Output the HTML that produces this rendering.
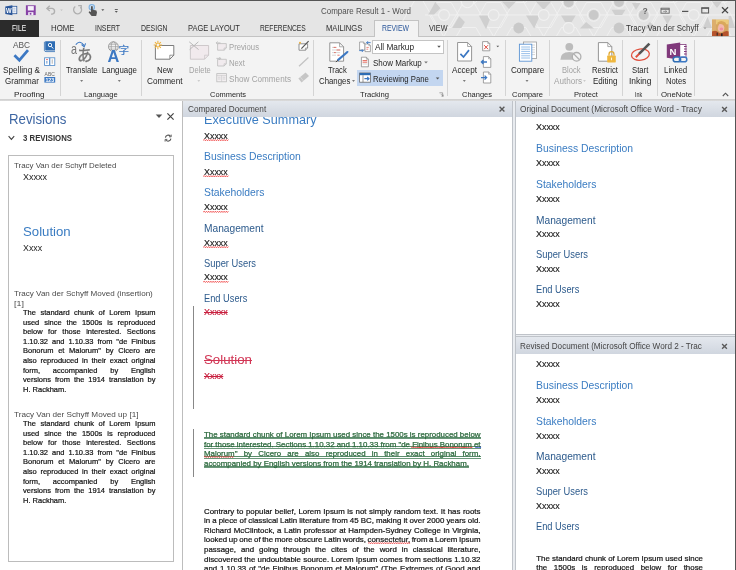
<!DOCTYPE html>
<html><head><meta charset="utf-8"><title>Compare Result 1 - Word</title>
<style>
html,body{margin:0;padding:0;}
body{width:736px;height:570px;overflow:hidden;position:relative;background:#fff;font-family:"Liberation Sans",sans-serif;}
.t{position:absolute;white-space:pre;}
.b{position:absolute;}
svg{position:absolute;overflow:visible;}
</style></head><body>
<div id="win" style="position:absolute;left:0;top:0;width:736px;height:570px;overflow:hidden;will-change:transform;">
<div class="b" style="left:0px;top:0px;width:736px;height:37px;background:#e5e5e5;"></div>
<div class="b" style="left:0px;top:0px;width:736px;height:1px;background:#555;"></div>
<div class="b" style="left:0px;top:36px;width:736px;height:1px;background:#c3c3c3;"></div>
<div class="b" style="left:0px;top:37px;width:736px;height:62px;background:#f3f3f3;"></div>
<div class="b" style="left:0px;top:99px;width:736px;height:1.5999999999999943px;background:linear-gradient(#cdcdcd,#dcdcdc);"></div>
<div class="b" style="left:0px;top:20px;width:39px;height:16.5px;background:#2b2b2b;"></div>
<div class="b" style="left:373.5px;top:20px;width:45.0px;height:17px;background:#f3f3f3;border:1px solid #c3c3c3;border-bottom:none;box-sizing:border-box;"></div>
<div class="b" style="left:60.0px;top:40px;width:1.0px;height:56px;background:#d4d4d4;"></div>
<div class="b" style="left:141.0px;top:40px;width:1.0px;height:56px;background:#d4d4d4;"></div>
<div class="b" style="left:313.3px;top:40px;width:1.0px;height:56px;background:#d4d4d4;"></div>
<div class="b" style="left:447.0px;top:40px;width:1.0px;height:56px;background:#d4d4d4;"></div>
<div class="b" style="left:505.3px;top:40px;width:1.0px;height:56px;background:#d4d4d4;"></div>
<div class="b" style="left:549.0px;top:40px;width:1.0px;height:56px;background:#d4d4d4;"></div>
<div class="b" style="left:622.2px;top:40px;width:1.0px;height:56px;background:#d4d4d4;"></div>
<div class="b" style="left:657.0px;top:40px;width:1.0px;height:56px;background:#d4d4d4;"></div>
<div class="b" style="left:694.0px;top:40px;width:1.0px;height:56px;background:#d4d4d4;"></div>
<div class="b" style="left:372.4px;top:39.5px;width:71.40000000000003px;height:14.799999999999997px;background:#fff;border:1px solid #c4c4c4;box-sizing:border-box;"></div>
<div class="b" style="left:357.4px;top:70.2px;width:85.60000000000002px;height:15.599999999999994px;background:#c3d6f0;"></div>
<div class="b" style="left:182.2px;top:101px;width:1.0px;height:469px;background:#bdbdbd;"></div>
<div class="b" style="left:183.3px;top:100.6px;width:328.99999999999994px;height:16.80000000000001px;background:linear-gradient(#e4e8ee,#d0d6df);z-index:4;"></div>
<div class="b" style="left:512.3px;top:100.6px;width:3.300000000000068px;height:469.4px;background:#e9ecf0;border-left:1px solid #bfc3c9;border-right:1px solid #bfc3c9;box-sizing:border-box;"></div>
<div class="b" style="left:515.6px;top:100.6px;width:220.39999999999998px;height:16.80000000000001px;background:linear-gradient(#e4e8ee,#d0d6df);z-index:4;"></div>
<div class="b" style="left:515.6px;top:333.8px;width:220.39999999999998px;height:3.1999999999999886px;background:#e9ecf0;border-top:1px solid #bfc3c9;border-bottom:1px solid #bfc3c9;box-sizing:border-box;"></div>
<div class="b" style="left:515.6px;top:337px;width:220.39999999999998px;height:17.399999999999977px;background:linear-gradient(#e4e8ee,#d0d6df);z-index:4;"></div>
<div class="b" style="left:8.4px;top:155.2px;width:165.6px;height:406.59999999999997px;border:1px solid #bcbcbc;box-sizing:border-box;background:#fff;"></div>
<div class="b" style="left:193px;top:305.7px;width:1px;height:103.80000000000001px;background:#888;"></div>
<div class="b" style="left:193px;top:429.4px;width:1px;height:47.400000000000034px;background:#888;"></div>
<div class="b" style="left:735px;top:0px;width:1px;height:570px;background:#555;z-index:7;"></div>
<div class="b" style="left:204px;top:436.9px;width:276.5px;height:0.6500000000000341px;background:#5b8d6c;"></div>
<div class="b" style="left:204px;top:438.45px;width:276.5px;height:0.6500000000000341px;background:#6b987a;"></div>
<div class="b" style="left:204px;top:446.48px;width:276.5px;height:0.6499999999999773px;background:#5b8d6c;"></div>
<div class="b" style="left:204px;top:448.03px;width:276.5px;height:0.6500000000000341px;background:#6b987a;"></div>
<div class="b" style="left:204px;top:456.06px;width:276.5px;height:0.6499999999999773px;background:#5b8d6c;"></div>
<div class="b" style="left:204px;top:457.61px;width:276.5px;height:0.6499999999999773px;background:#6b987a;"></div>
<div class="b" style="left:204px;top:465.64px;width:265px;height:0.6500000000000341px;background:#5b8d6c;"></div>
<div class="b" style="left:204px;top:467.19px;width:265px;height:0.6499999999999773px;background:#6b987a;"></div>
<svg width="736" height="570" viewBox="0 0 736 570" style="left:0;top:0"><defs><clipPath id="tclip"><rect x="400" y="1" width="336" height="35"/></clipPath></defs><g clip-path="url(#tclip)"><path d="M425,15H736" stroke="#f1f1f1" stroke-width="0.9"/><path d="M372.5,0L393.9,37M414.9,0L393.5,37M422.5,0L443.9,37M464.9,0L443.5,37M472.5,0L493.9,37M514.9,0L493.5,37M522.5,0L543.9,37M564.9,0L543.5,37M572.5,0L593.9,37M614.9,0L593.5,37M622.5,0L643.9,37M664.9,0L643.5,37M672.5,0L693.9,37M714.9,0L693.5,37M722.5,0L743.9,37M764.9,0L743.5,37M772.5,0L793.9,37M814.9,0L793.5,37" stroke="#f1f1f1" stroke-width="0.9" fill="none"/><polygon points="458.4,15.0 451.2,27.5 436.8,27.5 429.6,15.0 436.8,2.5 451.2,2.5" fill="none" stroke="#f1f1f1" stroke-width="0.9"/><polygon points="508.0,15.0 500.8,27.5 486.4,27.5 479.2,15.0 486.4,2.5 500.8,2.5" fill="none" stroke="#f1f1f1" stroke-width="0.9"/><polygon points="558.1,15.0 550.9,27.5 536.5,27.5 529.3,15.0 536.5,2.5 550.9,2.5" fill="none" stroke="#f1f1f1" stroke-width="0.9"/><polygon points="608.1,15.0 600.9,27.5 586.5,27.5 579.3,15.0 586.5,2.5 600.9,2.5" fill="none" stroke="#f1f1f1" stroke-width="0.9"/><polygon points="658.1,15.0 650.9,27.5 636.5,27.5 629.3,15.0 636.5,2.5 650.9,2.5" fill="none" stroke="#f1f1f1" stroke-width="0.9"/><polygon points="708.1,15.0 700.9,27.5 686.5,27.5 679.3,15.0 686.5,2.5 700.9,2.5" fill="none" stroke="#f1f1f1" stroke-width="0.9"/><polygon points="483.1,-10.0 475.9,2.5 461.5,2.5 454.3,-10.0 461.5,-22.5 475.9,-22.5" fill="none" stroke="#f1f1f1" stroke-width="0.9"/><polygon points="533.1,-10.0 525.9,2.5 511.5,2.5 504.3,-10.0 511.5,-22.5 525.9,-22.5" fill="none" stroke="#f1f1f1" stroke-width="0.9"/><polygon points="583.1,-10.0 575.9,2.5 561.5,2.5 554.3,-10.0 561.5,-22.5 575.9,-22.5" fill="none" stroke="#f1f1f1" stroke-width="0.9"/><polygon points="633.4,-10.0 626.2,2.5 611.8,2.5 604.6,-10.0 611.8,-22.5 626.2,-22.5" fill="none" stroke="#f1f1f1" stroke-width="0.9"/><polygon points="683.4,-10.0 676.2,2.5 661.8,2.5 654.6,-10.0 661.8,-22.5 676.2,-22.5" fill="none" stroke="#f1f1f1" stroke-width="0.9"/><polygon points="733.4,-10.0 726.2,2.5 711.8,2.5 704.6,-10.0 711.8,-22.5 726.2,-22.5" fill="none" stroke="#f1f1f1" stroke-width="0.9"/><polygon points="483.1,40.0 475.9,52.5 461.5,52.5 454.3,40.0 461.5,27.5 475.9,27.5" fill="none" stroke="#f1f1f1" stroke-width="0.9"/><polygon points="533.1,40.0 525.9,52.5 511.5,52.5 504.3,40.0 511.5,27.5 525.9,27.5" fill="none" stroke="#f1f1f1" stroke-width="0.9"/><polygon points="583.1,40.0 575.9,52.5 561.5,52.5 554.3,40.0 561.5,27.5 575.9,27.5" fill="none" stroke="#f1f1f1" stroke-width="0.9"/><polygon points="633.4,40.0 626.2,52.5 611.8,52.5 604.6,40.0 611.8,27.5 626.2,27.5" fill="none" stroke="#f1f1f1" stroke-width="0.9"/><polygon points="683.4,40.0 676.2,52.5 661.8,52.5 654.6,40.0 661.8,27.5 676.2,27.5" fill="none" stroke="#f1f1f1" stroke-width="0.9"/><polygon points="733.4,40.0 726.2,52.5 711.8,52.5 704.6,40.0 711.8,27.5 726.2,27.5" fill="none" stroke="#f1f1f1" stroke-width="0.9"/><polygon points="435.2,2 440.5,8.2 434,14.6 428.2,14.6 432,8" fill="#cfcfcf"/><polygon points="459.2,16.3 464.9,22 461.3,28 452.2,28" fill="#cfcfcf"/><polygon points="478.8,15.5 491.3,15.5 486.1,29.3" fill="#cfcfcf"/><polygon points="502,1.6 516,1.6 509,9" fill="#cfcfcf"/><polygon points="526,15.5 539.9,15.5 534.2,28.5" fill="#cfcfcf"/><polygon points="535.8,1.6 551.3,1.6 543.6,9.8" fill="#cfcfcf"/><polygon points="561,15.5 575.7,15.5 571.7,22 565.1,22" fill="#cfcfcf"/><polygon points="611.6,9.8 625.5,9.8 622.2,15 614.9,15" fill="#cfcfcf"/><polygon points="632,3 640.5,3 636,10" fill="#cfcfcf"/><polygon points="662.5,15.5 672.3,15.5 667.4,24.5" fill="#cfcfcf"/><polygon points="712,1.6 722,1.6 717,8" fill="#cfcfcf"/><polygon points="728.6,16 731,16 735,28 728.6,28" fill="#cfcfcf"/><polygon points="703,28 707.6,17 712,28" fill="#cfcfcf"/><polygon points="586,22 594,28.5 580,28.5" fill="#cfcfcf"/><polygon points="650,22 657,28.5 644,28.5" fill="#cfcfcf"/><circle cx="444" cy="15" r="5.4" fill="#e5e5e5" stroke="#f1f1f1" stroke-width="1.1"/><circle cx="493.6" cy="15" r="5.4" fill="#e5e5e5" stroke="#f1f1f1" stroke-width="1.1"/><circle cx="543.7" cy="15" r="5.4" fill="#e5e5e5" stroke="#f1f1f1" stroke-width="1.1"/><circle cx="568.7" cy="28" r="5.4" fill="#e5e5e5" stroke="#f1f1f1" stroke-width="1.1"/><circle cx="693.7" cy="15" r="5.4" fill="#e5e5e5" stroke="#f1f1f1" stroke-width="1.1"/><circle cx="467.5" cy="1.6" r="6.2" fill="#e5e5e5" stroke="#f1f1f1" stroke-width="1.1"/><circle cx="593.7" cy="15" r="6.3" fill="#e5e5e5" stroke="#f1f1f1" stroke-width="1"/><circle cx="593.7" cy="15" r="4.9" fill="#c9c9c9"/><circle cx="568.7" cy="2.4" r="6.3" fill="#e5e5e5" stroke="#f1f1f1" stroke-width="1"/><circle cx="568.7" cy="2.4" r="4.9" fill="#c9c9c9"/><circle cx="619" cy="2" r="6.3" fill="#e5e5e5" stroke="#f1f1f1" stroke-width="1"/><circle cx="619" cy="2" r="4.9" fill="#c9c9c9"/><circle cx="643.7" cy="15" r="6.3" fill="#e5e5e5" stroke="#f1f1f1" stroke-width="1"/><circle cx="643.7" cy="15" r="4.9" fill="#c9c9c9"/><circle cx="518.7" cy="28" r="5.4" fill="#c9c9c9"/><circle cx="619" cy="28" r="5.4" fill="#c9c9c9"/></g>
<rect x="11.6" y="6.3" width="5.2" height="7.4" fill="#fff" stroke="#2b579a" stroke-width="0.8"/>
<path d="M13.2,8.2H15.6M13.2,10H15.6M13.2,11.8H15.6" stroke="#7f9cc8" stroke-width="0.7"/>
<polygon points="5.3,6.4 12.4,5.2 12.4,15.2 5.3,14" fill="#2b579a"/>
<text x="6" y="12.6" font-size="6.4" font-weight="700" fill="#fff" font-family="Liberation Sans, sans-serif" textLength="5.6" lengthAdjust="spacingAndGlyphs">W</text>
<rect x="25.9" y="5.3" width="9.8" height="9.8" fill="#8742a6"/>
<rect x="27.8" y="6.1" width="6" height="4.4" fill="#f6f0fa"/>
<rect x="28.2" y="12.2" width="5.2" height="2.9" fill="#f6f0fa"/>
<rect x="29.7" y="12.9" width="1.7" height="1.8" fill="#8742a6"/>
<path d="M47,8.4H52.2A2.9,2.9 0 0 1 52.2,14.1H51" fill="none" stroke="#b0b0b0" stroke-width="1.4"/>
<path d="M49.8,5.8L46.9,8.4L49.8,11" fill="none" stroke="#b0b0b0" stroke-width="1.4"/>
<polygon points="60.20,9.45 62.80,9.45 61.50,10.95" fill="#c2c2c2"/>
<path d="M80.43,6.97A4.0,4.0 0 1 1 75.31,6.52" fill="none" stroke="#b0b0b0" stroke-width="1.3"/>
<path d="M78.2,5.6H81.3V8.8" fill="none" stroke="#b0b0b0" stroke-width="1.2"/>
<circle cx="91.8" cy="7.2" r="2.7" fill="#c9def2" stroke="#7fb2e2" stroke-width="1.1"/>
<path d="M91,7V12L89.4,11.2L88.6,12.2L91.6,15.9H96.2L97,12.4L96.4,10.6L92.8,9.8V7A0.9,0.9 0 0 0 91,7Z" fill="#555"/>
<polygon points="101.30,9.35 104.30,9.35 102.80,11.05" fill="#555"/>
<rect x="114.8" y="9" width="3" height="0.9" fill="#555"/>
<polygon points="114.80,10.95 117.80,10.95 116.30,12.65" fill="#555"/>
<text x="642.4" y="13.6" font-size="8.6" font-weight="700" fill="#666" font-family="Liberation Sans, sans-serif">?</text>
<rect x="661" y="8.2" width="8.2" height="5" fill="none" stroke="#666" stroke-width="0.9"/>
<path d="M661,9.4H669.2" stroke="#666" stroke-width="0.8"/><path d="M663.2,11.4H666.5M665.4,10.3L666.7,11.4L665.4,12.5" stroke="#666" stroke-width="0.6" fill="none"/>
<rect x="682" y="10.8" width="6.3" height="1.2" fill="#555"/>
<rect x="701.8" y="8" width="6.8" height="5" fill="none" stroke="#555" stroke-width="1"/><rect x="701.3" y="7.4" width="7.8" height="1.3" fill="#555"/>
<path d="M722,7.3L728,13.1M728,7.3L722,13.1" stroke="#444" stroke-width="1.3"/>
<polygon points="703.60,27.60 706.40,27.60 705.00,29.20" fill="#999"/>
<rect x="712" y="19.7" width="16.6" height="16.4" fill="#d6a564"/>
<rect x="712" y="19.7" width="16.6" height="4.6" fill="#eccb7c"/>
<rect x="712" y="19.7" width="4" height="12" fill="#dcae6c"/>
<ellipse cx="721" cy="27.6" rx="3.4" ry="4.2" fill="#f2b9ac"/>
<ellipse cx="721.4" cy="29" rx="1.8" ry="1.6" fill="#f08fa0"/>
<path d="M717.6,22.6Q721,19.6 725.4,22.6Q727.6,26 726,31L724.6,27Q723,23.4 719.4,24Q717.6,26 717.8,29.4Q716.4,26 717.6,22.6Z" fill="#d9a85c"/>
<path d="M712,31.6Q716,29.6 718.6,32.4Q721.4,34.6 724.6,31.6Q727,30.4 728.6,31.6V36.1H712Z" fill="#b5532c"/>
<rect x="716.6" y="32.6" width="1.2" height="3" fill="#3a2a24"/><rect x="721" y="33.4" width="1.6" height="2.7" fill="#2a2424"/>
<path d="M14.4,55.2L19.4,60.2L28,50.2" fill="none" stroke="#3c78c3" stroke-width="2.7"/>
<path d="M45.2,41.2H55V50.6H46A1,1 0 0 1 45.2,49.8Z" fill="#2e6db4"/>
<path d="M44.4,41.8V50.4Q44.6,51.6 46,51.6H55" fill="none" stroke="#2e6db4" stroke-width="0.8"/>
<circle cx="50" cy="45" r="1.7" fill="none" stroke="#fff" stroke-width="0.9"/><path d="M51.2,46.3L53.2,48.5" stroke="#fff" stroke-width="1"/>
<rect x="44.6" y="57.8" width="4.9" height="7.6" fill="#fff" stroke="#4a86c8" stroke-width="0.8"/>
<rect x="49.9" y="57.8" width="4.9" height="7.6" fill="#fff" stroke="#4a86c8" stroke-width="0.8"/>
<rect x="46" y="59.3" width="2" height="0.8" fill="#e05050"/><rect x="46" y="61" width="1.6" height="2.6" fill="#9bbbe0"/><rect x="51.6" y="59.3" width="1.4" height="4.4" fill="#c8c8c8"/>
<text x="44.6" y="76.3" font-size="4.6" fill="#666" font-family="Liberation Sans, sans-serif" textLength="10.2" lengthAdjust="spacingAndGlyphs">ABC</text>
<rect x="44.4" y="77" width="10.8" height="5.6" fill="#3b78c3"/>
<text x="45.4" y="81.7" font-size="4.8" font-weight="700" fill="#fff" font-family="Liberation Sans, sans-serif" textLength="8.8" lengthAdjust="spacingAndGlyphs">123</text>
<text x="70.9" y="54.4" font-size="14.2" fill="#777" font-family="Liberation Sans, sans-serif" textLength="6" lengthAdjust="spacingAndGlyphs">a</text>
<text x="77" y="61.2" font-size="15.6" fill="#777" stroke="#777" stroke-width="0.35" font-family="Liberation Sans, Noto Sans CJK JP, sans-serif">あ</text>
<path d="M75.8,44.6Q79.8,39.6 84,45.4" fill="none" stroke="#3c78c3" stroke-width="1.1"/><path d="M81.6,44.5L84.2,46.8L85.6,43.4" fill="none" stroke="#3c78c3" stroke-width="1.1"/>
<polygon points="80.10,80.15 83.10,80.15 81.60,81.85" fill="#555"/>
<circle cx="113.4" cy="46.7" r="4.9" fill="none" stroke="#8a8a8a" stroke-width="0.8"/><ellipse cx="113.4" cy="46.7" rx="2.2" ry="4.9" fill="none" stroke="#8a8a8a" stroke-width="0.6"/><path d="M108.5,46.7H118.3M109.3,44.2H117.5M109.3,49.2H117.5" stroke="#8a8a8a" stroke-width="0.6"/>
<text x="107.6" y="62" font-size="16.4" font-weight="700" fill="#3c78c3" stroke="#f3f3f3" stroke-width="0.5" paint-order="stroke" font-family="Liberation Sans, sans-serif">A</text>
<text x="118.6" y="54" font-size="10.6" fill="#3c78c3" stroke="#3c78c3" stroke-width="0.2" font-family="Liberation Sans, Noto Sans CJK SC, sans-serif">字</text>
<polygon points="117.80,80.15 120.80,80.15 119.30,81.85" fill="#555"/>
<path d="M155.4,45.5H173.8V55.2L169.8,59.2H155.4Z" fill="#fff" stroke="#666" stroke-width="0.85"/>
<path d="M173.8,55.2H169.8V59.2" fill="none" stroke="#666" stroke-width="0.68"/>
<path d="M158.80,45.00L162.10,45.00M158.54,45.64L160.87,47.97M157.90,45.90L157.90,49.20M157.26,45.64L154.93,47.97M157.00,45.00L153.70,45.00M157.26,44.36L154.93,42.03M157.90,44.10L157.90,40.80M158.54,44.36L160.87,42.03" stroke="#f0b23c" stroke-width="1.1" fill="none"/><circle cx="157.9" cy="45" r="1.2" fill="#f3f3f3"/>
<path d="M190.4,45.5H208.6V55.2L204.6,59.2H190.4Z" fill="#f1eaed" stroke="#c9c4c6" stroke-width="0.9"/>
<path d="M208.6,55.2H204.6V59.2" fill="none" stroke="#c9c4c6" stroke-width="0.7200000000000001"/>
<path d="M189.2,41.8L198.6,49.6M198.4,41.8L189.6,49.6" stroke="#b9b9b9" stroke-width="1"/>
<polygon points="197.40,80.20 200.20,80.20 198.80,81.80" fill="#c0c0c0"/>
<path d="M217.6,43.6H226.3V48.0L224.10000000000002,50.2H217.6Z" fill="#f1ebee" stroke="#bdbdbd" stroke-width="0.8"/>
<path d="M226.3,48.0H224.10000000000002V50.2" fill="none" stroke="#bdbdbd" stroke-width="0.6400000000000001"/>
<path d="M216.2,42.9H220.5M217.6,41.5L216.2,42.9L217.6,44.3" stroke="#b3b3b3" stroke-width="0.7" fill="none"/>
<path d="M217.6,59.3H226.3V63.8L224.10000000000002,66H217.6Z" fill="#f1ebee" stroke="#bdbdbd" stroke-width="0.8"/>
<path d="M226.3,63.8H224.10000000000002V66" fill="none" stroke="#bdbdbd" stroke-width="0.6400000000000001"/>
<path d="M216.4,58.4H220.6M219.3,57L220.7,58.4L219.3,59.8" stroke="#b3b3b3" stroke-width="0.7" fill="none"/>
<rect x="216.8" y="73.6" width="9.6" height="8.2" fill="#f3eff1" stroke="#bdbdbd" stroke-width="0.8"/><path d="M216.8,75.4H226.4M221.6,75.4V81.8M218,77.2H220.6M218,79H220.6M222.6,77.2H225.4M222.6,79H225.4" stroke="#c4c4c4" stroke-width="0.6"/>
<path d="M299,43.8H307.6V48.0L305.40000000000003,50.2H299Z" fill="#fff" stroke="#777" stroke-width="0.8"/>
<path d="M307.6,48.0H305.40000000000003V50.2" fill="none" stroke="#777" stroke-width="0.6400000000000001"/>
<path d="M308.6,41.2L302.6,47.4L301.4,48.7" stroke="#555" stroke-width="1.2"/><circle cx="300" cy="42.8" r="1" fill="#f0b23c"/>
<path d="M299,66.3L308.4,57.5" stroke="#c2c2c2" stroke-width="1.2"/>
<polygon points="298.4,78.4 305.6,72.6 309,76 301.6,82.6" fill="#c6c6c6"/><path d="M300.3,77L303.4,80.8" stroke="#e6e6e6" stroke-width="0.6"/>
<path d="M329.8,42.8 H339.6 L343.6,46.8 V61.2 H329.8 Z" fill="#fff" stroke="#8a8a8a" stroke-width="0.9"/>
<path d="M339.6,42.8 V46.8 H343.6" fill="none" stroke="#8a8a8a" stroke-width="0.7200000000000001"/>
<path d="M332,47.4H335.6M332,50H340M332,52.6H340M332,55.2H336" stroke="#c4c4c4" stroke-width="0.7"/><path d="M333.6,47.4H336.4M336.6,50H340.4M337.4,55.2H339.6M334,52.6H335.8" stroke="#e05a4e" stroke-width="0.8"/>
<path d="M347.4,52L337.6,60.4" stroke="#3c78c3" stroke-width="2.1"/><path d="M337.9,60.1L335.9,62.1" stroke="#444" stroke-width="1"/><circle cx="347.6" cy="51.8" r="0.9" fill="#3c78c3"/>
<polygon points="352.00,80.15 355.00,80.15 353.50,81.85" fill="#555"/>
<path d="M359.6,42 H363.4 L365,43.6 V50 H359.6 Z" fill="#fff" stroke="#8a8a8a" stroke-width="0.7"/>
<path d="M363.4,42 V43.6 H365" fill="none" stroke="#8a8a8a" stroke-width="0.5599999999999999"/>
<path d="M365,44 H368.79999999999995 L370.4,45.6 V51.6 H365 Z" fill="#fff" stroke="#8a8a8a" stroke-width="0.7"/>
<path d="M368.79999999999995,44 V45.6 H370.4" fill="none" stroke="#8a8a8a" stroke-width="0.5599999999999999"/>
<path d="M366.4,47.4H368.8M366.4,49.2H368.2" stroke="#e05a4e" stroke-width="0.7"/>
<path d="M366.6,42.6H370.6M368,41.2L366.6,42.6L368,44" stroke="#3c78c3" stroke-width="0.9" fill="none"/><path d="M359.2,50.6H363.2M361.8,49.2L363.2,50.6L361.8,52" stroke="#3c78c3" stroke-width="0.9" fill="none"/>
<path d="M361.4,57.2 H366.4 L368.4,59.2 V66.8 H361.4 Z" fill="#fff" stroke="#8a8a8a" stroke-width="0.8"/>
<path d="M366.4,57.2 V59.2 H368.4" fill="none" stroke="#8a8a8a" stroke-width="0.6400000000000001"/>
<path d="M362.6,60.6H367.2M362.6,62.2H367.2" stroke="#e05a4e" stroke-width="0.9"/><path d="M362.6,64H367.2" stroke="#c4c4c4" stroke-width="0.7"/>
<rect x="359.6" y="73" width="10.8" height="9.2" fill="#fff" stroke="#6a6a6a" stroke-width="0.8"/><rect x="359.6" y="73" width="10.8" height="2.2" fill="#2e6db4"/><path d="M363,75.2V82.2" stroke="#6a6a6a" stroke-width="0.7"/>
<path d="M364.4,78.7H368.8M367.2,77L369,78.7L367.2,80.4" stroke="#3c78c3" stroke-width="1.2" fill="none"/>
<polygon points="437.20,45.80 440.80,45.80 439.00,47.80" fill="#555"/>
<polygon points="424.20,61.60 427.80,61.60 426.00,63.60" fill="#777"/>
<polygon points="435.80,77.40 439.40,77.40 437.60,79.40" fill="#555"/>
<path d="M439.4,92.8V95.8H442.6" fill="none" stroke="#888" stroke-width="0.7" transform="rotate(180 441 94.3)"/><path d="M441,94.2L443,96.2M443.2,94.6V96.3H441.5" stroke="#777" stroke-width="0.6" fill="none"/>
<path d="M457.6,42.5 H467.6 L471.6,46.5 V61 H457.6 Z" fill="#fff" stroke="#8a8a8a" stroke-width="0.9"/>
<path d="M467.6,42.5 V46.5 H471.6" fill="none" stroke="#8a8a8a" stroke-width="0.7200000000000001"/>
<path d="M460.4,53.8L463.5,57L469,50.1" fill="none" stroke="#3c78c3" stroke-width="1.7"/>
<polygon points="462.80,80.15 465.80,80.15 464.30,81.85" fill="#555"/>
<path d="M482.6,41.6 H487.8 L489.8,43.6 V50.8 H482.6 Z" fill="#fff" stroke="#8a8a8a" stroke-width="0.8"/>
<path d="M487.8,41.6 V43.6 H489.8" fill="none" stroke="#8a8a8a" stroke-width="0.6400000000000001"/>
<path d="M484.2,45.2L488,49.2M488,45.2L484.2,49.2" stroke="#e0483c" stroke-width="1"/>
<polygon points="496.40,45.70 499.20,45.70 497.80,47.30" fill="#555"/>
<path d="M483.4,56.6 H488.6 L490.8,58.800000000000004 V67.4 H483.4 Z" fill="#fff" stroke="#8a8a8a" stroke-width="0.8"/>
<path d="M488.6,56.6 V58.800000000000004 H490.8" fill="none" stroke="#8a8a8a" stroke-width="0.6400000000000001"/>
<path d="M481.4,62H487M483.4,60L481.4,62L483.4,64" stroke="#3c78c3" stroke-width="1.3" fill="none"/>
<path d="M483.4,72 H488.6 L490.8,74.2 V83 H483.4 Z" fill="#fff" stroke="#8a8a8a" stroke-width="0.8"/>
<path d="M488.6,72 V74.2 H490.8" fill="none" stroke="#8a8a8a" stroke-width="0.6400000000000001"/>
<path d="M481,77.6H486.4M484.6,75.6L486.6,77.6L484.6,79.6" stroke="#3c78c3" stroke-width="1.3" fill="none"/>
<rect x="523.6" y="42" width="12.8" height="16.6" fill="#fff" stroke="#9a9a9a" stroke-width="0.8"/><path d="M531,45H535M531,47.4H535M531,49.8H535M531,52.2H535M531,54.6H535" stroke="#bbb" stroke-width="0.6"/>
<rect x="519.4" y="44.2" width="12.4" height="17" fill="#fff" stroke="#5b93d3" stroke-width="0.9"/><path d="M521.2,47H530M521.2,49.2H530M521.2,51.4H530M521.2,53.6H530M521.2,55.8H530M521.2,58H530" stroke="#7fb0e4" stroke-width="0.8"/>
<polygon points="525.50,80.15 528.50,80.15 527.00,81.85" fill="#555"/>
<circle cx="569.3" cy="46.8" r="3.9" fill="#bcbcbc"/><path d="M560.4,59.8Q560.4,52 569.3,52Q578,52 578,59.8Z" fill="#bcbcbc"/>
<circle cx="576.6" cy="56.8" r="4.3" fill="#f3f3f3" stroke="#b0b0b0" stroke-width="1.3"/><path d="M573.7,53.9L579.5,59.7" stroke="#b0b0b0" stroke-width="1.3"/>
<polygon points="583.10,80.20 585.90,80.20 584.50,81.80" fill="#bdbdbd"/>
<path d="M598.4,42.6 H607.8 L611.8,46.6 V61.2 H598.4 Z" fill="#fff" stroke="#8a8a8a" stroke-width="0.9"/>
<path d="M607.8,42.6 V46.6 H611.8" fill="none" stroke="#8a8a8a" stroke-width="0.7200000000000001"/>
<rect x="607.2" y="55.6" width="8.6" height="6.8" rx="0.6" fill="#efb73e"/><path d="M609,55.6V54.2A2.5,2.5 0 0 1 614,54.2V55.6" fill="none" stroke="#e0a62c" stroke-width="1.2"/><rect x="611" y="57.6" width="1" height="2.6" fill="#fff6dd"/>
<ellipse cx="640.4" cy="54.6" rx="9" ry="5.6" fill="none" stroke="#e0503e" stroke-width="1.3" transform="rotate(-8 640.4 54.6)"/>
<path d="M649.4,43.6L638.8,54.2" stroke="#555" stroke-width="2.6"/><path d="M639.4,53.6L635.8,57.2" stroke="#e0503e" stroke-width="2"/>
<rect x="678" y="44.4" width="8" height="13" fill="#fff" stroke="#80397b" stroke-width="0.8"/><path d="M684,46.5H686.6M684,49H686.6M684,51.5H686.6M684,54H686.6" stroke="#80397b" stroke-width="1"/>
<polygon points="666.8,44.6 680.2,42.6 680.2,59.8 666.8,57.8" fill="#80397b"/>
<text x="669.4" y="54.6" font-size="9.6" font-weight="700" fill="#fff" font-family="Liberation Sans, sans-serif">N</text>
<rect x="673.2" y="57" width="7.4" height="4.8" rx="2.4" fill="#f3f3f3" stroke="#2e6db4" stroke-width="1.5"/><rect x="679.4" y="57" width="7.4" height="4.8" rx="2.4" fill="none" stroke="#3c78c3" stroke-width="1.5"/>
<path d="M722.8,96L725.5,93.2L728.2,96" fill="none" stroke="#555" stroke-width="1.1"/>
<polygon points="155.70,114.55 162.30,114.55 159.00,118.05" fill="#555"/>
<path d="M167.4,113.4L173.6,119.6M173.6,113.4L167.4,119.6" stroke="#444" stroke-width="1.2"/>
<path d="M8.6,136.2L11.4,139.4L14.2,136.2" fill="none" stroke="#444" stroke-width="1.1"/>
<path d="M165.4,137.6A2.8,2.8 0 0 1 170.4,136.2M170.9,138.6A2.8,2.8 0 0 1 165.9,140" fill="none" stroke="#555" stroke-width="1.1"/><path d="M171.2,134.6V136.8H169M165.1,141.6V139.4H167.3" fill="none" stroke="#555" stroke-width="0.9"/></svg>
<svg width="736" height="570" viewBox="0 0 736 570" style="left:0;top:0;z-index:6"><path d="M203.20,140.25L204.30,139.55L205.40,140.75L206.50,139.55L207.60,140.75L208.70,139.55L209.80,140.75L210.90,139.55L212.00,140.75L213.10,139.55L214.20,140.75L215.30,139.55L216.40,140.75L217.50,139.55L218.60,140.75L219.70,139.55L220.80,140.75L221.90,139.55L223.00,140.75L224.10,139.55L225.20,140.75L226.30,139.55L227.40,140.75L228.35,139.55" fill="none" stroke="#ee3535" stroke-width="0.85" stroke-linejoin="round"/>
<path d="M203.20,176.35L204.30,175.65L205.40,176.85L206.50,175.65L207.60,176.85L208.70,175.65L209.80,176.85L210.90,175.65L212.00,176.85L213.10,175.65L214.20,176.85L215.30,175.65L216.40,176.85L217.50,175.65L218.60,176.85L219.70,175.65L220.80,176.85L221.90,175.65L223.00,176.85L224.10,175.65L225.20,176.85L226.30,175.65L227.40,176.85L228.35,175.65" fill="none" stroke="#ee3535" stroke-width="0.85" stroke-linejoin="round"/>
<path d="M203.20,211.95L204.30,211.25L205.40,212.45L206.50,211.25L207.60,212.45L208.70,211.25L209.80,212.45L210.90,211.25L212.00,212.45L213.10,211.25L214.20,212.45L215.30,211.25L216.40,212.45L217.50,211.25L218.60,212.45L219.70,211.25L220.80,212.45L221.90,211.25L223.00,212.45L224.10,211.25L225.20,212.45L226.30,211.25L227.40,212.45L228.35,211.25" fill="none" stroke="#ee3535" stroke-width="0.85" stroke-linejoin="round"/>
<path d="M203.20,247.25L204.30,246.55L205.40,247.75L206.50,246.55L207.60,247.75L208.70,246.55L209.80,247.75L210.90,246.55L212.00,247.75L213.10,246.55L214.20,247.75L215.30,246.55L216.40,247.75L217.50,246.55L218.60,247.75L219.70,246.55L220.80,247.75L221.90,246.55L223.00,247.75L224.10,246.55L225.20,247.75L226.30,246.55L227.40,247.75L228.35,246.55" fill="none" stroke="#ee3535" stroke-width="0.85" stroke-linejoin="round"/>
<path d="M203.20,281.95L204.30,281.25L205.40,282.45L206.50,281.25L207.60,282.45L208.70,281.25L209.80,282.45L210.90,281.25L212.00,282.45L213.10,281.25L214.20,282.45L215.30,281.25L216.40,282.45L217.50,281.25L218.60,282.45L219.70,281.25L220.80,282.45L221.90,281.25L223.00,282.45L224.10,281.25L225.20,282.45L226.30,281.25L227.40,282.45L228.35,281.25" fill="none" stroke="#ee3535" stroke-width="0.85" stroke-linejoin="round"/>
<path d="M411.20,447.55L412.30,446.85L413.40,448.05L414.50,446.85L415.60,448.05L416.70,446.85L417.80,448.05L418.90,446.85L420.00,448.05L421.10,446.85L422.20,448.05L423.30,446.85L424.40,448.05L425.50,446.85L426.60,448.05L427.70,446.85L428.80,448.05L429.90,446.85L431.00,448.05L432.10,446.85L433.20,448.05L434.30,446.85L435.40,448.05L436.50,446.85L437.60,448.05L438.70,446.85L439.80,448.05L440.90,446.85L442.00,448.05L443.10,446.85L444.20,448.05L445.30,446.85L446.40,448.05L447.50,446.85L448.60,448.05L449.70,446.85L450.80,448.05L451.90,446.85L453.00,448.05L454.10,446.85L455.20,448.05L456.30,446.85L457.40,448.05L458.50,446.85L459.60,448.05L460.70,446.85L461.80,448.05L462.90,446.85L464.00,448.05L465.10,446.85L466.20,448.05L467.30,446.85L468.40,448.05L469.50,446.85L470.60,448.05L471.70,446.85L472.00,448.05" fill="none" stroke="#ee3535" stroke-width="0.85" stroke-linejoin="round"/>
<path d="M475.00,447.55L476.10,446.85L477.20,448.05L478.30,446.85L479.40,448.05L480.50,446.85L480.60,448.05" fill="none" stroke="#3a55d8" stroke-width="0.85" stroke-linejoin="round"/>
<path d="M204.00,457.05L205.10,456.35L206.20,457.55L207.30,456.35L208.40,457.55L209.50,456.35L210.60,457.55L211.70,456.35L212.80,457.55L213.90,456.35L215.00,457.55L216.10,456.35L217.20,457.55L218.30,456.35L219.40,457.55L220.50,456.35L221.60,457.55L222.70,456.35L223.80,457.55L224.90,456.35L226.00,457.55L227.10,456.35L228.20,457.55L229.30,456.35L230.40,457.55L231.50,456.35L232.60,457.55L233.50,456.35" fill="none" stroke="#ee3535" stroke-width="0.85" stroke-linejoin="round"/>
<path d="M368.20,543.25L369.30,542.55L370.40,543.75L371.50,542.55L372.60,543.75L373.70,542.55L374.80,543.75L375.90,542.55L377.00,543.75L378.10,542.55L379.20,543.75L380.30,542.55L381.40,543.75L382.50,542.55L383.60,543.75L384.70,542.55L385.80,543.75L386.90,542.55L388.00,543.75L389.10,542.55L390.20,543.75L391.30,542.55L392.40,543.75L393.50,542.55L394.60,543.75L395.70,542.55L396.80,543.75L397.90,542.55L399.00,543.75L400.10,542.55L401.20,543.75L402.30,542.55L403.40,543.75L404.50,542.55L405.60,543.75L406.70,542.55L407.80,543.75L408.90,542.55L409.80,543.75" fill="none" stroke="#ee3535" stroke-width="0.85" stroke-linejoin="round"/>
<path d="M499.6,106.8L504.4,111.60000000000001M504.4,106.8L499.6,111.60000000000001" stroke="#5a5a5a" stroke-width="1.35"/>
<path d="M722.1,106.89999999999999L726.9,111.7M726.9,106.89999999999999L722.1,111.7" stroke="#5a5a5a" stroke-width="1.35"/>
<path d="M722.1,344.0L726.9,348.79999999999995M726.9,344.0L722.1,348.79999999999995" stroke="#5a5a5a" stroke-width="1.35"/></svg>
<span class="t" id="t0" style="left:321.00px;top:7.47px;font-size:8.9px;line-height:8.9px;color:#505050;transform:scaleX(0.8958);transform-origin:0 0;">Compare Result 1 - Word</span>
<span class="t" id="t1" style="left:11.60px;top:23.95px;font-size:8.8px;line-height:8.8px;color:#fff;transform:scaleX(0.7643);transform-origin:0 0;">FILE</span>
<span class="t" id="t2" style="left:50.80px;top:23.95px;font-size:8.8px;line-height:8.8px;color:#2e2e2e;transform:scaleX(0.8899);transform-origin:0 0;">HOME</span>
<span class="t" id="t3" style="left:94.50px;top:23.95px;font-size:8.8px;line-height:8.8px;color:#2e2e2e;transform:scaleX(0.7786);transform-origin:0 0;">INSERT</span>
<span class="t" id="t4" style="left:140.50px;top:23.95px;font-size:8.8px;line-height:8.8px;color:#2e2e2e;transform:scaleX(0.7855);transform-origin:0 0;">DESIGN</span>
<span class="t" id="t5" style="left:187.70px;top:23.95px;font-size:8.8px;line-height:8.8px;color:#2e2e2e;transform:scaleX(0.8522);transform-origin:0 0;">PAGE LAYOUT</span>
<span class="t" id="t6" style="left:259.70px;top:23.95px;font-size:8.8px;line-height:8.8px;color:#2e2e2e;transform:scaleX(0.7617);transform-origin:0 0;">REFERENCES</span>
<span class="t" id="t7" style="left:325.70px;top:23.95px;font-size:8.8px;line-height:8.8px;color:#2e2e2e;transform:scaleX(0.8633);transform-origin:0 0;">MAILINGS</span>
<span class="t" id="t8" style="left:382.20px;top:23.95px;font-size:8.8px;line-height:8.8px;color:#2b579a;transform:scaleX(0.7780);transform-origin:0 0;">REVIEW</span>
<span class="t" id="t9" style="left:429.30px;top:23.95px;font-size:8.8px;line-height:8.8px;color:#2e2e2e;transform:scaleX(0.8228);transform-origin:0 0;">VIEW</span>
<span class="t" id="t10" style="left:625.70px;top:23.85px;font-size:8.8px;line-height:8.8px;color:#333;transform:scaleX(0.8963);transform-origin:0 0;">Tracy Van der Schyff</span>
<span class="t" id="t11" style="left:3.00px;top:66.00px;font-size:8.5px;line-height:8.5px;color:#262626;transform:scaleX(0.9665);transform-origin:0 0;">Spelling &amp;</span>
<span class="t" id="t12" style="left:5.00px;top:76.60px;font-size:8.5px;line-height:8.5px;color:#262626;transform:scaleX(0.9418);transform-origin:0 0;">Grammar</span>
<span class="t" id="t13" style="left:13.80px;top:91.23px;font-size:8.0px;line-height:8.0px;color:#262626;transform:scaleX(1.0236);transform-origin:0 0;">Proofing</span>
<span class="t" id="t14" style="left:65.50px;top:66.00px;font-size:8.5px;line-height:8.5px;color:#262626;transform:scaleX(0.8968);transform-origin:0 0;">Translate</span>
<span class="t" id="t15" style="left:101.80px;top:66.00px;font-size:8.5px;line-height:8.5px;color:#262626;transform:scaleX(0.9252);transform-origin:0 0;">Language</span>
<span class="t" id="t16" style="left:83.80px;top:91.23px;font-size:8.0px;line-height:8.0px;color:#262626;transform:scaleX(0.9468);transform-origin:0 0;">Language</span>
<span class="t" id="t17" style="left:156.80px;top:66.00px;font-size:8.5px;line-height:8.5px;color:#262626;transform:scaleX(0.9227);transform-origin:0 0;">New</span>
<span class="t" id="t18" style="left:147.00px;top:76.60px;font-size:8.5px;line-height:8.5px;color:#262626;transform:scaleX(0.9635);transform-origin:0 0;">Comment</span>
<span class="t" id="t19" style="left:188.50px;top:66.00px;font-size:8.5px;line-height:8.5px;color:#a3a3a3;transform:scaleX(0.8870);transform-origin:0 0;">Delete</span>
<span class="t" id="t20" style="left:229.00px;top:42.80px;font-size:8.5px;line-height:8.5px;color:#a3a3a3;transform:scaleX(0.9069);transform-origin:0 0;">Previous</span>
<span class="t" id="t21" style="left:229.00px;top:59.40px;font-size:8.5px;line-height:8.5px;color:#a3a3a3;transform:scaleX(0.9037);transform-origin:0 0;">Next</span>
<span class="t" id="t22" style="left:229.00px;top:75.40px;font-size:8.5px;line-height:8.5px;color:#a3a3a3;transform:scaleX(0.9580);transform-origin:0 0;">Show Comments</span>
<span class="t" id="t23" style="left:209.80px;top:91.23px;font-size:8.0px;line-height:8.0px;color:#262626;transform:scaleX(0.9305);transform-origin:0 0;">Comments</span>
<span class="t" id="t24" style="left:327.80px;top:66.00px;font-size:8.5px;line-height:8.5px;color:#262626;transform:scaleX(0.8931);transform-origin:0 0;">Track</span>
<span class="t" id="t25" style="left:319.00px;top:76.60px;font-size:8.5px;line-height:8.5px;color:#262626;transform:scaleX(0.9197);transform-origin:0 0;">Changes</span>
<span class="t" id="t26" style="left:374.80px;top:42.80px;font-size:8.5px;line-height:8.5px;color:#262626;transform:scaleX(0.9712);transform-origin:0 0;">All Markup</span>
<span class="t" id="t27" style="left:373.00px;top:59.40px;font-size:8.5px;line-height:8.5px;color:#262626;transform:scaleX(0.9390);transform-origin:0 0;">Show Markup</span>
<span class="t" id="t28" style="left:373.00px;top:75.40px;font-size:8.5px;line-height:8.5px;color:#262626;transform:scaleX(0.9082);transform-origin:0 0;">Reviewing Pane</span>
<span class="t" id="t29" style="left:360.20px;top:91.23px;font-size:8.0px;line-height:8.0px;color:#262626;transform:scaleX(0.9575);transform-origin:0 0;">Tracking</span>
<span class="t" id="t30" style="left:451.80px;top:66.00px;font-size:8.5px;line-height:8.5px;color:#262626;transform:scaleX(0.9615);transform-origin:0 0;">Accept</span>
<span class="t" id="t31" style="left:461.80px;top:91.23px;font-size:8.0px;line-height:8.0px;color:#262626;transform:scaleX(0.9366);transform-origin:0 0;">Changes</span>
<span class="t" id="t32" style="left:510.50px;top:66.00px;font-size:8.5px;line-height:8.5px;color:#262626;transform:scaleX(0.9523);transform-origin:0 0;">Compare</span>
<span class="t" id="t33" style="left:512.00px;top:91.23px;font-size:8.0px;line-height:8.0px;color:#262626;transform:scaleX(0.9421);transform-origin:0 0;">Compare</span>
<span class="t" id="t34" style="left:561.50px;top:66.00px;font-size:8.5px;line-height:8.5px;color:#a3a3a3;transform:scaleX(0.8896);transform-origin:0 0;">Block</span>
<span class="t" id="t35" style="left:554.00px;top:76.60px;font-size:8.5px;line-height:8.5px;color:#a3a3a3;transform:scaleX(0.9557);transform-origin:0 0;">Authors</span>
<span class="t" id="t36" style="left:591.50px;top:66.00px;font-size:8.5px;line-height:8.5px;color:#262626;transform:scaleX(0.9024);transform-origin:0 0;">Restrict</span>
<span class="t" id="t37" style="left:592.50px;top:76.60px;font-size:8.5px;line-height:8.5px;color:#262626;transform:scaleX(0.9423);transform-origin:0 0;">Editing</span>
<span class="t" id="t38" style="left:574.00px;top:91.23px;font-size:8.0px;line-height:8.0px;color:#262626;transform:scaleX(0.9391);transform-origin:0 0;">Protect</span>
<span class="t" id="t39" style="left:632.00px;top:66.00px;font-size:8.5px;line-height:8.5px;color:#262626;transform:scaleX(0.9079);transform-origin:0 0;">Start</span>
<span class="t" id="t40" style="left:628.80px;top:76.60px;font-size:8.5px;line-height:8.5px;color:#262626;transform:scaleX(0.9917);transform-origin:0 0;">Inking</span>
<span class="t" id="t41" style="left:635.30px;top:91.23px;font-size:8.0px;line-height:8.0px;color:#262626;transform:scaleX(0.6747);transform-origin:0 0;">Ink</span>
<span class="t" id="t42" style="left:663.80px;top:66.00px;font-size:8.5px;line-height:8.5px;color:#262626;transform:scaleX(0.9257);transform-origin:0 0;">Linked</span>
<span class="t" id="t43" style="left:665.80px;top:76.60px;font-size:8.5px;line-height:8.5px;color:#262626;transform:scaleX(0.9001);transform-origin:0 0;">Notes</span>
<span class="t" id="t44" style="left:660.80px;top:91.23px;font-size:8.0px;line-height:8.0px;color:#262626;transform:scaleX(0.9740);transform-origin:0 0;">OneNote</span>
<span class="t" id="t45" style="left:13.20px;top:41.49px;font-size:8.4px;line-height:8.4px;color:#555;transform:scaleX(0.9922);transform-origin:0 0;">ABC</span>
<span class="t" id="t46" style="left:8.60px;top:110.73px;font-size:15.2px;line-height:15.2px;color:#3d66a3;transform:scaleX(0.8718);transform-origin:0 0;">Revisions</span>
<span class="t" id="t47" style="left:23.00px;top:134.00px;font-size:8.5px;line-height:8.5px;color:#333;font-weight:700;transform:scaleX(0.9178);transform-origin:0 0;">3 REVISIONS</span>
<span class="t" id="t48" style="left:14.30px;top:162.03px;font-size:8.0px;line-height:8.0px;color:#4a4a4a;transform:scaleX(0.9887);transform-origin:0 0;">Tracy Van der Schyff Deleted</span>
<span class="t" id="t49" style="left:22.80px;top:173.18px;font-size:9.0px;line-height:9.0px;color:#222;transform:scaleX(0.9993);transform-origin:0 0;">Xxxxx</span>
<span class="t" id="t50" style="left:22.80px;top:225.10px;font-size:13.7px;line-height:13.7px;color:#3a7cc2;transform:scaleX(0.9642);transform-origin:0 0;">Solution</span>
<span class="t" id="t51" style="left:22.80px;top:244.08px;font-size:9.0px;line-height:9.0px;color:#222;transform:scaleX(0.9787);transform-origin:0 0;">Xxxx</span>
<span class="t" id="t52" style="left:14.30px;top:289.83px;font-size:8.0px;line-height:8.0px;color:#4a4a4a;transform:scaleX(1.0081);transform-origin:0 0;">Tracy Van der Schyff Moved (insertion)</span>
<span class="t" id="t53" style="left:14.30px;top:300.23px;font-size:8.0px;line-height:8.0px;color:#4a4a4a;transform:scaleX(1.1116);transform-origin:0 0;">[1]</span>
<span class="t" id="t54" style="left:23.00px;top:308.85px;font-size:7.5px;line-height:7.5px;color:#111;word-spacing:2.403px;-webkit-text-stroke:0.2px #111;">The standard chunk of Lorem Ipsum</span>
<span class="t" id="t55" style="left:23.00px;top:319.42px;font-size:7.5px;line-height:7.5px;color:#111;word-spacing:2.816px;-webkit-text-stroke:0.2px #111;">used since the 1500s is reproduced</span>
<span class="t" id="t56" style="left:23.00px;top:327.99px;font-size:7.5px;line-height:7.5px;color:#111;word-spacing:3.418px;-webkit-text-stroke:0.2px #111;">below for those interested. Sections</span>
<span class="t" id="t57" style="left:23.00px;top:337.56px;font-size:7.5px;line-height:7.5px;color:#111;word-spacing:1.866px;-webkit-text-stroke:0.2px #111;">1.10.32 and 1.10.33 from &quot;de Finibus</span>
<span class="t" id="t58" style="left:23.00px;top:347.13px;font-size:7.5px;line-height:7.5px;color:#111;word-spacing:2.625px;-webkit-text-stroke:0.2px #111;">Bonorum et Malorum&quot; by Cicero are</span>
<span class="t" id="t59" style="left:23.00px;top:356.70px;font-size:7.5px;line-height:7.5px;color:#111;word-spacing:1.569px;-webkit-text-stroke:0.2px #111;">also reproduced in their exact original</span>
<span class="t" id="t60" style="left:23.00px;top:367.27px;font-size:7.5px;line-height:7.5px;color:#111;word-spacing:10.677px;-webkit-text-stroke:0.2px #111;">form, accompanied by English</span>
<span class="t" id="t61" style="left:23.00px;top:375.84px;font-size:7.5px;line-height:7.5px;color:#111;word-spacing:1.903px;-webkit-text-stroke:0.2px #111;">versions from the 1914 translation by</span>
<span class="t" id="t62" style="left:23.00px;top:386.41px;font-size:7.5px;line-height:7.5px;color:#111;-webkit-text-stroke:0.2px #111;">H. Rackham.</span>
<span class="t" id="t63" style="left:14.30px;top:410.83px;font-size:8.0px;line-height:8.0px;color:#4a4a4a;transform:scaleX(1.0193);transform-origin:0 0;">Tracy Van der Schyff Moved up [1]</span>
<span class="t" id="t64" style="left:23.00px;top:419.85px;font-size:7.5px;line-height:7.5px;color:#111;word-spacing:2.403px;-webkit-text-stroke:0.2px #111;">The standard chunk of Lorem Ipsum</span>
<span class="t" id="t65" style="left:23.00px;top:430.42px;font-size:7.5px;line-height:7.5px;color:#111;word-spacing:2.816px;-webkit-text-stroke:0.2px #111;">used since the 1500s is reproduced</span>
<span class="t" id="t66" style="left:23.00px;top:438.99px;font-size:7.5px;line-height:7.5px;color:#111;word-spacing:3.418px;-webkit-text-stroke:0.2px #111;">below for those interested. Sections</span>
<span class="t" id="t67" style="left:23.00px;top:448.56px;font-size:7.5px;line-height:7.5px;color:#111;word-spacing:1.866px;-webkit-text-stroke:0.2px #111;">1.10.32 and 1.10.33 from &quot;de Finibus</span>
<span class="t" id="t68" style="left:23.00px;top:458.13px;font-size:7.5px;line-height:7.5px;color:#111;word-spacing:2.625px;-webkit-text-stroke:0.2px #111;">Bonorum et Malorum&quot; by Cicero are</span>
<span class="t" id="t69" style="left:23.00px;top:467.70px;font-size:7.5px;line-height:7.5px;color:#111;word-spacing:1.569px;-webkit-text-stroke:0.2px #111;">also reproduced in their exact original</span>
<span class="t" id="t70" style="left:23.00px;top:478.27px;font-size:7.5px;line-height:7.5px;color:#111;word-spacing:10.677px;-webkit-text-stroke:0.2px #111;">form, accompanied by English</span>
<span class="t" id="t71" style="left:23.00px;top:486.84px;font-size:7.5px;line-height:7.5px;color:#111;word-spacing:1.903px;-webkit-text-stroke:0.2px #111;">versions from the 1914 translation by</span>
<span class="t" id="t72" style="left:23.00px;top:497.41px;font-size:7.5px;line-height:7.5px;color:#111;-webkit-text-stroke:0.2px #111;">H. Rackham.</span>
<span class="t" id="t73" style="left:188.20px;top:105.00px;font-size:8.5px;line-height:8.5px;color:#454545;transform:scaleX(0.9679);transform-origin:0 0;z-index:5;">Compared Document</span>
<span class="t" id="t74" style="left:204.00px;top:112.83px;font-size:13.2px;line-height:13.2px;color:#3a7cc2;transform:scaleX(0.9594);transform-origin:0 0;">Executive Summary</span>
<span class="t" id="t75" style="left:204.00px;top:132.18px;font-size:9.0px;line-height:9.0px;color:#1a1a1a;transform:scaleX(0.9889);transform-origin:0 0;-webkit-text-stroke:0.15px #1a1a1a;">Xxxxx</span>
<span class="t" id="t76" style="left:204.00px;top:151.19px;font-size:11px;line-height:11px;color:#3a7cc2;transform:scaleX(0.9424);transform-origin:0 0;">Business Description</span>
<span class="t" id="t77" style="left:204.00px;top:168.28px;font-size:9.0px;line-height:9.0px;color:#1a1a1a;transform:scaleX(0.9889);transform-origin:0 0;-webkit-text-stroke:0.15px #1a1a1a;">Xxxxx</span>
<span class="t" id="t78" style="left:204.00px;top:187.19px;font-size:11px;line-height:11px;color:#3a7cc2;transform:scaleX(0.9421);transform-origin:0 0;">Stakeholders</span>
<span class="t" id="t79" style="left:204.00px;top:202.88px;font-size:9.0px;line-height:9.0px;color:#1a1a1a;transform:scaleX(0.9889);transform-origin:0 0;-webkit-text-stroke:0.15px #1a1a1a;">Xxxxx</span>
<span class="t" id="t80" style="left:204.00px;top:224.28px;font-size:10.3px;line-height:10.3px;color:#2c5a8c;transform:scaleX(0.9899);transform-origin:0 0;">Management</span>
<span class="t" id="t81" style="left:204.00px;top:239.18px;font-size:9.0px;line-height:9.0px;color:#1a1a1a;transform:scaleX(0.9889);transform-origin:0 0;-webkit-text-stroke:0.15px #1a1a1a;">Xxxxx</span>
<span class="t" id="t82" style="left:204.00px;top:259.08px;font-size:10.3px;line-height:10.3px;color:#2c5a8c;transform:scaleX(0.9085);transform-origin:0 0;">Super Users</span>
<span class="t" id="t83" style="left:204.00px;top:272.88px;font-size:9.0px;line-height:9.0px;color:#1a1a1a;transform:scaleX(0.9889);transform-origin:0 0;-webkit-text-stroke:0.15px #1a1a1a;">Xxxxx</span>
<span class="t" id="t84" style="left:204.00px;top:293.78px;font-size:10.3px;line-height:10.3px;color:#2c5a8c;transform:scaleX(0.9006);transform-origin:0 0;">End Users</span>
<span class="t" id="t85" style="left:204.00px;top:308.38px;font-size:9.0px;line-height:9.0px;color:#c8203f;transform:scaleX(0.9889);transform-origin:0 0;text-decoration:line-through;-webkit-text-stroke:0.15px #c8203f;">Xxxxx</span>
<span class="t" id="t86" style="left:204.00px;top:352.66px;font-size:13.4px;line-height:13.4px;color:#d23655;transform:scaleX(0.9916);transform-origin:0 0;text-decoration:line-through;text-decoration-thickness:0.8px;">Solution</span>
<span class="t" id="t87" style="left:204.00px;top:372.18px;font-size:9.0px;line-height:9.0px;color:#c8203f;transform:scaleX(0.9890);transform-origin:0 0;text-decoration:line-through;-webkit-text-stroke:0.15px #c8203f;">Xxxx</span>
<span class="t" id="t88" style="left:204.00px;top:431.41px;font-size:7.9px;line-height:7.9px;color:#2d6a3e;word-spacing:0.013px;-webkit-text-stroke:0.25px #2d6a3e;">The standard chunk of Lorem Ipsum used since the 1500s is reproduced below</span>
<span class="t" id="t89" style="left:204.00px;top:440.99px;font-size:7.9px;line-height:7.9px;color:#2d6a3e;word-spacing:-0.041px;-webkit-text-stroke:0.25px #2d6a3e;">for those interested. Sections 1.10.32 and 1.10.33 from &quot;de Finibus Bonorum et</span>
<span class="t" id="t90" style="left:204.00px;top:449.57px;font-size:7.9px;line-height:7.9px;color:#2d6a3e;word-spacing:4.037px;-webkit-text-stroke:0.25px #2d6a3e;">Malorum&quot; by Cicero are also reproduced in their exact original form,</span>
<span class="t" id="t91" style="left:204.00px;top:460.15px;font-size:7.9px;line-height:7.9px;color:#2d6a3e;-webkit-text-stroke:0.25px #2d6a3e;">accompanied by English versions from the 1914 translation by H. Rackham.</span>
<span class="t" id="t92" style="left:204.00px;top:507.91px;font-size:7.9px;line-height:7.9px;color:#111;word-spacing:0.352px;-webkit-text-stroke:0.2px #111;">Contrary to popular belief, Lorem Ipsum is not simply random text. It has roots</span>
<span class="t" id="t93" style="left:204.00px;top:517.49px;font-size:7.9px;line-height:7.9px;color:#111;word-spacing:-0.133px;-webkit-text-stroke:0.2px #111;">in a piece of classical Latin literature from 45 BC, making it over 2000 years old.</span>
<span class="t" id="t94" style="left:204.00px;top:527.07px;font-size:7.9px;line-height:7.9px;color:#111;word-spacing:0.378px;-webkit-text-stroke:0.2px #111;">Richard McClintock, a Latin professor at Hampden-Sydney College in Virginia,</span>
<span class="t" id="t95" style="left:204.00px;top:535.65px;font-size:7.9px;line-height:7.9px;color:#111;word-spacing:-0.594px;-webkit-text-stroke:0.2px #111;">looked up one of the more obscure Latin words, consectetur, from a Lorem Ipsum</span>
<span class="t" id="t96" style="left:204.00px;top:546.23px;font-size:7.9px;line-height:7.9px;color:#111;word-spacing:2.766px;-webkit-text-stroke:0.2px #111;">passage, and going through the cites of the word in classical literature,</span>
<span class="t" id="t97" style="left:204.00px;top:555.81px;font-size:7.9px;line-height:7.9px;color:#111;word-spacing:0.019px;-webkit-text-stroke:0.2px #111;">discovered the undoubtable source. Lorem Ipsum comes from sections 1.10.32</span>
<span class="t" id="t98" style="left:204.00px;top:565.39px;font-size:7.9px;line-height:7.9px;color:#111;word-spacing:0.534px;-webkit-text-stroke:0.2px #111;">and 1.10.33 of &quot;de Finibus Bonorum et Malorum&quot; (The Extremes of Good and</span>
<span class="t" id="t99" style="left:520.00px;top:105.00px;font-size:8.5px;line-height:8.5px;color:#454545;transform:scaleX(0.9810);transform-origin:0 0;z-index:5;">Original Document (Microsoft Office Word - Tracy</span>
<span class="t" id="t100" style="left:536.00px;top:123.38px;font-size:9.0px;line-height:9.0px;color:#1a1a1a;transform:scaleX(0.9889);transform-origin:0 0;-webkit-text-stroke:0.15px #1a1a1a;">Xxxxx</span>
<span class="t" id="t101" style="left:536.00px;top:142.69px;font-size:11px;line-height:11px;color:#3a7cc2;transform:scaleX(0.9443);transform-origin:0 0;">Business Description</span>
<span class="t" id="t102" style="left:536.00px;top:158.68px;font-size:9.0px;line-height:9.0px;color:#1a1a1a;transform:scaleX(0.9889);transform-origin:0 0;-webkit-text-stroke:0.15px #1a1a1a;">Xxxxx</span>
<span class="t" id="t103" style="left:536.00px;top:178.69px;font-size:11px;line-height:11px;color:#3a7cc2;transform:scaleX(0.9421);transform-origin:0 0;">Stakeholders</span>
<span class="t" id="t104" style="left:536.00px;top:194.68px;font-size:9.0px;line-height:9.0px;color:#1a1a1a;transform:scaleX(0.9889);transform-origin:0 0;-webkit-text-stroke:0.15px #1a1a1a;">Xxxxx</span>
<span class="t" id="t105" style="left:536.00px;top:215.78px;font-size:10.3px;line-height:10.3px;color:#2c5a8c;transform:scaleX(0.9899);transform-origin:0 0;">Management</span>
<span class="t" id="t106" style="left:536.00px;top:229.58px;font-size:9.0px;line-height:9.0px;color:#1a1a1a;transform:scaleX(0.9889);transform-origin:0 0;-webkit-text-stroke:0.15px #1a1a1a;">Xxxxx</span>
<span class="t" id="t107" style="left:536.00px;top:249.58px;font-size:10.3px;line-height:10.3px;color:#2c5a8c;transform:scaleX(0.9085);transform-origin:0 0;">Super Users</span>
<span class="t" id="t108" style="left:536.00px;top:265.38px;font-size:9.0px;line-height:9.0px;color:#1a1a1a;transform:scaleX(0.9889);transform-origin:0 0;-webkit-text-stroke:0.15px #1a1a1a;">Xxxxx</span>
<span class="t" id="t109" style="left:536.00px;top:285.28px;font-size:10.3px;line-height:10.3px;color:#2c5a8c;transform:scaleX(0.9006);transform-origin:0 0;">End Users</span>
<span class="t" id="t110" style="left:536.00px;top:300.18px;font-size:9.0px;line-height:9.0px;color:#1a1a1a;transform:scaleX(0.9889);transform-origin:0 0;-webkit-text-stroke:0.15px #1a1a1a;">Xxxxx</span>
<span class="t" id="t111" style="left:520.00px;top:342.00px;font-size:8.5px;line-height:8.5px;color:#454545;transform:scaleX(0.9590);transform-origin:0 0;z-index:5;">Revised Document (Microsoft Office Word 2 - Trac</span>
<span class="t" id="t112" style="left:536.00px;top:360.38px;font-size:9.0px;line-height:9.0px;color:#1a1a1a;transform:scaleX(0.9889);transform-origin:0 0;-webkit-text-stroke:0.15px #1a1a1a;">Xxxxx</span>
<span class="t" id="t113" style="left:536.00px;top:379.69px;font-size:11px;line-height:11px;color:#3a7cc2;transform:scaleX(0.9443);transform-origin:0 0;">Business Description</span>
<span class="t" id="t114" style="left:536.00px;top:395.68px;font-size:9.0px;line-height:9.0px;color:#1a1a1a;transform:scaleX(0.9889);transform-origin:0 0;-webkit-text-stroke:0.15px #1a1a1a;">Xxxxx</span>
<span class="t" id="t115" style="left:536.00px;top:415.69px;font-size:11px;line-height:11px;color:#3a7cc2;transform:scaleX(0.9421);transform-origin:0 0;">Stakeholders</span>
<span class="t" id="t116" style="left:536.00px;top:431.68px;font-size:9.0px;line-height:9.0px;color:#1a1a1a;transform:scaleX(0.9889);transform-origin:0 0;-webkit-text-stroke:0.15px #1a1a1a;">Xxxxx</span>
<span class="t" id="t117" style="left:536.00px;top:451.78px;font-size:10.3px;line-height:10.3px;color:#2c5a8c;transform:scaleX(0.9899);transform-origin:0 0;">Management</span>
<span class="t" id="t118" style="left:536.00px;top:466.58px;font-size:9.0px;line-height:9.0px;color:#1a1a1a;transform:scaleX(0.9889);transform-origin:0 0;-webkit-text-stroke:0.15px #1a1a1a;">Xxxxx</span>
<span class="t" id="t119" style="left:536.00px;top:486.58px;font-size:10.3px;line-height:10.3px;color:#2c5a8c;transform:scaleX(0.9085);transform-origin:0 0;">Super Users</span>
<span class="t" id="t120" style="left:536.00px;top:502.38px;font-size:9.0px;line-height:9.0px;color:#1a1a1a;transform:scaleX(0.9889);transform-origin:0 0;-webkit-text-stroke:0.15px #1a1a1a;">Xxxxx</span>
<span class="t" id="t121" style="left:536.00px;top:522.28px;font-size:10.3px;line-height:10.3px;color:#2c5a8c;transform:scaleX(0.9006);transform-origin:0 0;">End Users</span>
<span class="t" id="t122" style="left:536.20px;top:555.11px;font-size:7.9px;line-height:7.9px;color:#111;word-spacing:0.018px;-webkit-text-stroke:0.2px #111;">The standard chunk of Lorem Ipsum used since</span>
<span class="t" id="t123" style="left:536.20px;top:563.69px;font-size:7.9px;line-height:7.9px;color:#111;word-spacing:4.404px;-webkit-text-stroke:0.2px #111;">the 1500s is reproduced below for those</span>
</div>
</body></html>
